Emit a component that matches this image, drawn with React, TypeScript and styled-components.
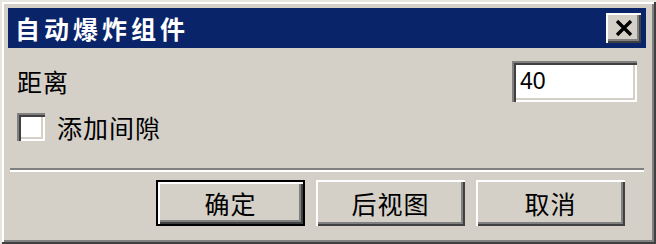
import React from "react";
import styled, { createGlobalStyle } from "styled-components";

const GlobalStyle = createGlobalStyle`
  html, body {
    margin: 0;
    padding: 0;
    background: #d4d0c8;
  }
  * {
    box-sizing: border-box;
  }
`;

const cjk = `"Noto Sans CJK SC", "Noto Sans", sans-serif`;

const Window = styled.div`
  width: 656px;
  height: 244px;
  background: #d4d0c8;
  padding: 8px 10px 0 8px;
  display: flex;
  flex-direction: column;
  font-family: ${cjk};
  color: #000;
  box-shadow:
    inset 2px 2px 0 #e8e6e1,
    inset -2px -2px 0 #404040,
    inset 4px 4px 0 #ffffff,
    inset -4px -4px 0 #808080;
`;

const TitleBar = styled.div`
  height: 40px;
  background: #0a246a;
  display: flex;
  align-items: center;
  justify-content: space-between;
  padding: 0 5px 0 7px;
`;

const Title = styled.span`
  color: #fff;
  font-weight: 700;
  font-size: 25px;
  letter-spacing: 4px;
  line-height: 1;
`;

const CloseButton = styled.div`
  width: 35px;
  height: 30px;
  background: #d4d0c8;
  display: flex;
  align-items: center;
  justify-content: center;
  box-shadow:
    inset 2px 2px 0 #ffffff,
    inset -2px -2px 0 #404040,
    inset -4px -4px 0 #808080;
`;

const Body = styled.div`
  padding: 13px 9px 0 9px;
  display: flex;
  flex-direction: column;
  gap: 11px;
`;

const Row = styled.div`
  display: flex;
  align-items: center;
  justify-content: space-between;
`;

const Label = styled.span`
  font-size: 25px;
  letter-spacing: 1px;
  line-height: 1;
`;

const TextBox = styled.div`
  width: 125px;
  height: 41px;
  background: #fff;
  display: flex;
  align-items: center;
  padding-left: 8px;
  font-family: "Liberation Sans", Arial, sans-serif;
  font-size: 23px;
  box-shadow:
    inset 2px 2px 0 #808080,
    inset 4px 4px 0 #404040,
    inset -2px -2px 0 #ffffff,
    inset -4px -4px 0 #d4d0c8;
`;

const CheckRow = styled.label`
  display: flex;
  align-items: center;
  gap: 12px;
  height: 28px;
`;

const CheckBox = styled.span`
  width: 28px;
  height: 28px;
  background: #fff;
  box-shadow:
    inset 2px 2px 0 #808080,
    inset 4px 4px 0 #404040,
    inset -2px -2px 0 #ffffff,
    inset -4px -4px 0 #d4d0c8;
`;

const Separator = styled.div`
  margin: 27px 2px 0 2px;
  height: 4px;
  border-top: 2px solid #808080;
  border-bottom: 2px solid #ffffff;
`;

const ButtonRow = styled.div`
  margin-top: 8px;
  display: flex;
  justify-content: flex-end;
  gap: 11px;
  padding-right: 21px;
`;

const Button = styled.div<{ $default?: boolean }>`
  width: 149px;
  height: 46px;
  display: flex;
  align-items: center;
  justify-content: center;
  font-size: 25px;
  letter-spacing: 1px;
  background: #d4d0c8;
  box-shadow: ${(p) =>
    p.$default
      ? `inset 0 0 0 2px #000,
         inset 4px 4px 0 #ffffff,
         inset -4px -4px 0 #404040,
         inset -6px -6px 0 #808080`
      : `inset 2px 2px 0 #ffffff,
         inset -2px -2px 0 #404040,
         inset -4px -4px 0 #808080`};
`;

const CloseIcon = () => (
  <svg width="18" height="16" viewBox="0 0 18 16">
    <path d="M2 1 L16 15 M16 1 L2 15" stroke="#000" strokeWidth="3.4" />
  </svg>
);

export default function App() {
  return (
    <>
      <GlobalStyle />
      <Window>
        <TitleBar>
          <Title>自动爆炸组件</Title>
          <CloseButton>
            <CloseIcon />
          </CloseButton>
        </TitleBar>
        <Body>
          <Row>
            <Label>距离</Label>
            <TextBox>40</TextBox>
          </Row>
          <CheckRow>
            <CheckBox />
            <Label>添加间隙</Label>
          </CheckRow>
        </Body>
        <Separator />
        <ButtonRow>
          <Button $default>确定</Button>
          <Button>后视图</Button>
          <Button>取消</Button>
        </ButtonRow>
      </Window>
    </>
  );
}
